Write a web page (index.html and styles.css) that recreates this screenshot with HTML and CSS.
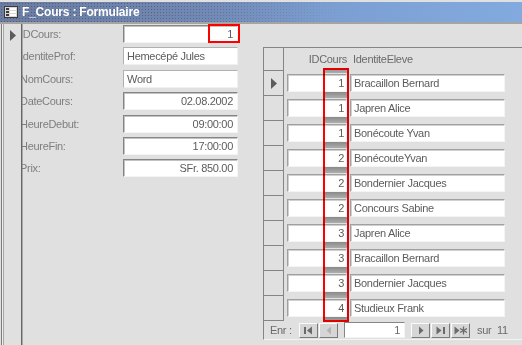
FILE: index.html
```html
<!DOCTYPE html>
<html lang="fr">
<head>
    <meta charset="UTF-8">
    <meta name="viewport" content="width=device-width, initial-scale=1.0">
    <title>F_Cours : Formulaire</title>
    <link rel="stylesheet" href="styles.css">
</head>
<body>
<div class="window">
    <div class="titlebar">
        <svg class="form-icon" width="14" height="12" viewBox="0 0 14 12">
            <rect x="0.5" y="0.5" width="13" height="11" fill="#d8d8d8" stroke="#3a3a3a"/>
            <rect x="2" y="2" width="3" height="2" fill="#3a3a3a"/>
            <rect x="6" y="2" width="6" height="2" fill="#fff"/>
            <rect x="2" y="5" width="3" height="2" fill="#3a3a3a"/>
            <rect x="6" y="5" width="6" height="2" fill="#fff"/>
            <rect x="2" y="8" width="3" height="2" fill="#3a3a3a"/>
            <rect x="6" y="8" width="6" height="2" fill="#fff"/>
        </svg>
        <span class="title">F_Cours : Formulaire</span>
    </div>

    <div class="form">
        <div class="selector">
            <div class="current">
                <svg width="7" height="11" viewBox="0 0 7 11"><polygon points="0,0 6,5.5 0,11" fill="#5c5c5c"/></svg>
            </div>
        </div>

        <div class="detail">
            <div class="fields">
                <label class="lbl">IDCours:</label>
                <div class="box num">1<span class="mark"></span></div>

                <label class="lbl">IdentiteProf:</label>
                <div class="box light">Hemecépé Jules</div>

                <label class="lbl">NomCours:</label>
                <div class="box light">Word</div>

                <label class="lbl">DateCours:</label>
                <div class="box num">02.08.2002</div>

                <label class="lbl">HeureDebut:</label>
                <div class="box num">09:00:00</div>

                <label class="lbl">HeureFin:</label>
                <div class="box num">17:00:00</div>

                <label class="lbl">Prix:</label>
                <div class="box num">SFr. 850.00</div>
            </div>

            <div class="subform">
                <div class="sub-head">
                    <div class="sel"></div>
                    <div class="col-id">IDCours</div>
                    <div class="col-name">IdentiteEleve</div>
                </div>

                <div class="row">
                    <div class="sel">
                        <svg width="7" height="11" viewBox="0 0 7 11"><polygon points="0,0 6,5.5 0,11" fill="#5c5c5c"/></svg>
                    </div>
                    <div class="cell cell-id">1</div>
                    <div class="cell cell-name">Bracaillon Bernard</div>
                </div>
                <div class="row">
                    <div class="sel"></div>
                    <div class="cell cell-id">1</div>
                    <div class="cell cell-name">Japren Alice</div>
                </div>
                <div class="row">
                    <div class="sel"></div>
                    <div class="cell cell-id">1</div>
                    <div class="cell cell-name">Bonécoute Yvan</div>
                </div>
                <div class="row">
                    <div class="sel"></div>
                    <div class="cell cell-id">2</div>
                    <div class="cell cell-name">BonécouteYvan</div>
                </div>
                <div class="row">
                    <div class="sel"></div>
                    <div class="cell cell-id">2</div>
                    <div class="cell cell-name">Bondernier Jacques</div>
                </div>
                <div class="row">
                    <div class="sel"></div>
                    <div class="cell cell-id">2</div>
                    <div class="cell cell-name">Concours Sabine</div>
                </div>
                <div class="row">
                    <div class="sel"></div>
                    <div class="cell cell-id">3</div>
                    <div class="cell cell-name">Japren Alice</div>
                </div>
                <div class="row">
                    <div class="sel"></div>
                    <div class="cell cell-id">3</div>
                    <div class="cell cell-name">Bracaillon Bernard</div>
                </div>
                <div class="row">
                    <div class="sel"></div>
                    <div class="cell cell-id">3</div>
                    <div class="cell cell-name">Bondernier Jacques</div>
                </div>
                <div class="row">
                    <div class="sel"></div>
                    <div class="cell cell-id">4</div>
                    <div class="cell cell-name">Studieux Frank</div>
                </div>

                <div class="navbar">
                    <span class="nav-label">Enr :</span>
                    <span class="nav-btn first">
                        <svg width="9" height="9" viewBox="0 0 9 9"><rect x="0" y="1" width="2" height="7" fill="#6a6a6a"/><polygon points="8,0.5 3,4.5 8,8.5" fill="#6a6a6a"/></svg>
                    </span>
                    <span class="nav-btn">
                        <svg width="6" height="9" viewBox="0 0 6 9"><polygon points="5,0.5 0.5,4.5 5,8.5" fill="#b4b4b4"/></svg>
                    </span>
                    <span class="nav-pos">1</span>
                    <span class="nav-btn">
                        <svg width="6" height="9" viewBox="0 0 6 9"><polygon points="1,0.5 5.5,4.5 1,8.5" fill="#6a6a6a"/></svg>
                    </span>
                    <span class="nav-btn">
                        <svg width="9" height="9" viewBox="0 0 9 9"><polygon points="0.5,0.5 5.5,4.5 0.5,8.5" fill="#6a6a6a"/><rect x="7" y="1" width="2" height="7" fill="#6a6a6a"/></svg>
                    </span>
                    <span class="nav-btn">
                        <svg width="13" height="9" viewBox="0 0 13 9"><polygon points="0.5,0.5 5.5,4.5 0.5,8.5" fill="#6a6a6a"/><path d="M9.5 0.5v8M6 2.5l7 4M6 6.5l7-4" stroke="#6a6a6a" stroke-width="1.3"/></svg>
                    </span>
                    <span class="nav-total">sur&nbsp; 11</span>
                </div>

                <div class="highlight"></div>
            </div>
        </div>
    </div>
</div>
</body>
</html>
```

FILE: styles.css
```css
body {
    margin: 0;
    background: #e0e0e0;
    font-family: "Liberation Sans", Arial, sans-serif;
    font-size: 11px;
    letter-spacing: -0.3px;
    color: #5c5c5c;
}

.window {
    height: 345px;
    padding-top: 2px;
    box-sizing: border-box;
    overflow: hidden;
    background: #e0e0e0;
}

/* barre de titre */
.titlebar {
    position: relative;
    height: 20px;
    display: flex;
    align-items: center;
    gap: 4px;
    padding-left: 4px;
    background: linear-gradient(90deg, #6a7ca2 0%, #7189b6 40%, #7c9fd2 64%, #82aadf 100%);
    border-bottom: 2px solid #a4a4a4;
}

.titlebar::before {
    content: "";
    position: absolute;
    left: 0;
    top: 0;
    bottom: 0;
    width: 68%;
    background-image: radial-gradient(circle, rgba(70, 70, 70, 0.55) 0.7px, transparent 0.9px);
    background-size: 3px 3px;
    -webkit-mask-image: linear-gradient(90deg, #000 40%, transparent 100%);
    mask-image: linear-gradient(90deg, #000 40%, transparent 100%);
}

.form-icon {
    position: relative;
    flex: none;
}

.title {
    position: relative;
    color: #fff;
    font-weight: bold;
    font-size: 12px;
    letter-spacing: -0.2px;
}

.form {
    display: flex;
    height: 321px;
}

/* selecteur d'enregistrement */
.selector {
    flex: none;
    width: 19px;
    margin-left: 1px;
    border-left: 1px solid #7c7c7c;
    border-right: 1px solid #666;
    box-shadow: inset 1px 0 #eeeeee, inset 2px 0 #a8a8a8, 1px 0 #a8a8a8;
}

.current {
    height: 22px;
    display: flex;
    align-items: center;
    justify-content: center;
    padding-left: 4px;
}

.detail {
    flex: 1;
    display: flex;
    align-items: flex-start;
    overflow: hidden;
}

.fields {
    display: grid;
    grid-template-columns: 103px 115px;
    grid-auto-rows: 18px;
    row-gap: 4.4px;
    padding-top: 1px;
    margin-left: -2px;
    flex: none;
}

.lbl {
    line-height: 18px;
    color: #7e7e7e;
    white-space: nowrap;
}

.box {
    position: relative;
    background: #fff;
    border: 1px solid;
    border-color: #858585 #f4f4f4 #f4f4f4 #858585;
    box-shadow: inset 1px 1px #c2c2c2;
    padding: 0 4px 0 3px;
    line-height: 16px;
    box-sizing: border-box;
    white-space: nowrap;
}

.box.light {
    border-color: #b0b0b0 #f0f0f0 #f0f0f0 #b0b0b0;
    box-shadow: none;
}

.box.num {
    text-align: right;
}

.mark {
    position: absolute;
    left: 84px;
    top: -2px;
    right: -3px;
    bottom: -1px;
    border: 2px solid #f00;
}

/* sous-formulaire */
.subform {
    position: relative;
    flex: none;
    width: 300px;
    margin: 23px 0 0 25px;
    border-left: 1px solid #858585;
    border-top: 1px solid #858585;
    border-bottom: 1px solid #f2f2f2;
}

.sub-head {
    display: flex;
    height: 23px;
    color: #6a6a6a;
}

.sel {
    flex: none;
    width: 20px;
    box-sizing: border-box;
    border-right: 1px solid #858585;
    border-bottom: 1px solid #858585;
    display: flex;
    align-items: center;
    justify-content: center;
    padding-left: 2px;
}

.col-id {
    width: 60px;
    margin-left: 3px;
    text-align: right;
    line-height: 23px;
}

.col-name {
    margin-left: 3px;
    padding-left: 3px;
    line-height: 23px;
}

.row {
    display: flex;
    height: 25px;
}

.cell {
    margin: 3px 0 0 3px;
    height: 18px;
    box-sizing: border-box;
    background: #fff;
    border: 1px solid;
    border-color: #a0a0a0 #f4f4f4 #f4f4f4 #a0a0a0;
    box-shadow: inset 1px 1px #d0d0d0;
    line-height: 16px;
    white-space: nowrap;
}

.cell-id {
    width: 60px;
    text-align: right;
    padding-right: 2px;
}

.cell-name {
    width: 155px;
    padding-left: 3px;
}

.highlight {
    position: absolute;
    left: 59px;
    top: 20px;
    width: 26px;
    height: 254px;
    box-sizing: border-box;
    border: 2px solid #f00;
    background-image: linear-gradient(#9c9c9c 0, #c6c6c6 6px, transparent 6px);
    background-size: 100% 25px;
    background-position: 0 22px;
    background-repeat: repeat-y;
    mix-blend-mode: multiply;
}

/* barre de navigation */
.navbar {
    display: flex;
    align-items: center;
    height: 18px;
    padding-left: 6px;
    color: #6a6a6a;
}

.nav-label {
    width: 29px;
}

.nav-btn {
    width: 19px;
    height: 15px;
    margin-right: 1px;
    box-sizing: border-box;
    border: 1px solid;
    border-color: #fbfbfb #7a7a7a #7a7a7a #fbfbfb;
    background: #d6d6d6;
    display: flex;
    align-items: center;
    justify-content: center;
}

.nav-pos {
    width: 61px;
    height: 16px;
    margin: 0 6px 0 5px;
    box-sizing: border-box;
    background: #fff;
    border: 1px solid;
    border-color: #858585 #f4f4f4 #f4f4f4 #858585;
    text-align: right;
    padding-right: 4px;
    line-height: 14px;
}

.nav-total {
    margin-left: 6px;
}
```
